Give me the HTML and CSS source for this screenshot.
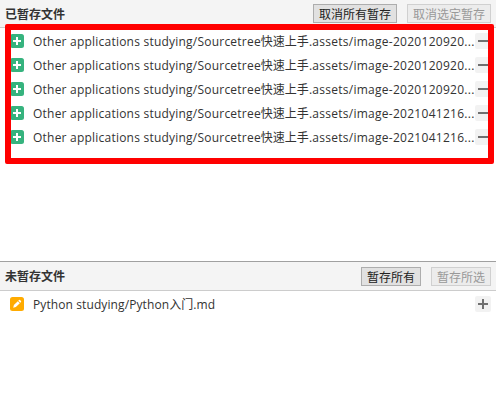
FILE: index.html
```html
<!DOCTYPE html>
<html lang="zh-CN">
<head>
<meta charset="utf-8">
<title>暂存文件</title>
<link rel="stylesheet" href="styles.css">
</head>
<body>
<svg class="defs" width="0" height="0">
  <symbol id="added" viewBox="0 0 14 14"><rect width="14" height="14" rx="2.5" fill="#36b37e"/><path d="M7 3v8M3 7h8" stroke="#fff" stroke-width="2"/></symbol>
  <symbol id="edited" viewBox="0 0 14 14"><rect width="14" height="14" rx="2.5" fill="#ffab00"/><path d="M3.2 10.8l.7-2.7 3.9-3.9 2 2-3.9 3.9zM8.3 3.7l.7-.7q.5-.4 1 0l1 1q.4.5 0 1l-.7.7z" fill="#fff"/></symbol>
  <symbol id="minus" viewBox="0 0 16 16"><path d="M3 8h10" stroke="#707070" stroke-width="2"/></symbol>
  <symbol id="plus" viewBox="0 0 16 16"><path d="M3 8h10M8 3v10" stroke="#707070" stroke-width="2"/></symbol>
</svg>
<section class="panel staged">
  <header class="bar">
    <h2>已暂存文件</h2>
    <button>取消所有暂存</button>
    <button disabled>取消选定暂存</button>
  </header>
  <ul class="files">
    <li><svg class="status"><use href="#added"/></svg><span class="name">Other applications studying/Sourcetree<span class="cjk">快速上手</span><span class="tail">.assets/image-2020120920...</span></span><svg class="action"><use href="#minus"/></svg></li>
    <li><svg class="status"><use href="#added"/></svg><span class="name">Other applications studying/Sourcetree<span class="cjk">快速上手</span><span class="tail">.assets/image-2020120920...</span></span><svg class="action"><use href="#minus"/></svg></li>
    <li><svg class="status"><use href="#added"/></svg><span class="name">Other applications studying/Sourcetree<span class="cjk">快速上手</span><span class="tail">.assets/image-2020120920...</span></span><svg class="action"><use href="#minus"/></svg></li>
    <li><svg class="status"><use href="#added"/></svg><span class="name">Other applications studying/Sourcetree<span class="cjk">快速上手</span><span class="tail">.assets/image-2021041216...</span></span><svg class="action"><use href="#minus"/></svg></li>
    <li><svg class="status"><use href="#added"/></svg><span class="name">Other applications studying/Sourcetree<span class="cjk">快速上手</span><span class="tail">.assets/image-2021041216...</span></span><svg class="action"><use href="#minus"/></svg></li>
  </ul>
  <div class="highlight"></div>
</section>
<section class="panel unstaged">
  <header class="bar">
    <h2>未暂存文件</h2>
    <button>暂存所有</button>
    <button disabled>暂存所选</button>
  </header>
  <ul class="files">
    <li><svg class="status"><use href="#edited"/></svg><span class="name">Python studying/Python<span class="cjk">入门</span><span class="tail">.md</span></span><svg class="action"><use href="#plus"/></svg></li>
  </ul>
</section>
</body>
</html>
```

FILE: styles.css
```css
* { box-sizing: border-box; }
body {
  margin: 0;
  height: 401px;
  overflow: hidden;
  background: #fff;
  color: #333;
  font: 12px "Open Sans", "Noto Sans CJK SC", sans-serif;
}
.defs { position: absolute; }
.panel { position: relative; }
.staged { height: 261px; }
.unstaged { border-top: 1px solid #a0a0a0; }
.bar {
  display: flex;
  align-items: center;
  gap: 10px;
  height: 28px;
  padding: 0 5px;
  background: #f4f4f4;
  border-bottom: 1px solid #ccc;
}
.unstaged .bar { height: 29px; }
h2 {
  flex: 1;
  margin: 0;
  font: bold 12px/18px "Noto Sans CJK SC", sans-serif;
}
button {
  height: 19px;
  padding: 0 5px;
  border: 1px solid #adadad;
  border-radius: 0;
  background: #e1e1e1;
  color: #222;
  font: 12px/17px "Noto Sans CJK SC", sans-serif;
}
button:disabled {
  border-color: #d0d0d0;
  background: #ececec;
  color: #999;
}
.files {
  margin: 0;
  padding: 1px 5px 0 10px;
  list-style: none;
}
li {
  display: flex;
  align-items: center;
  height: 24px;
}
.status { width: 14px; height: 14px; margin-right: 9px; }
.name {
  flex: 1;
  white-space: nowrap;
  line-height: 18px;
  letter-spacing: 0.1px;
}
.staged .name { letter-spacing: 0.22px; }
.staged .tail { letter-spacing: 0.27px; }
.name .cjk { font-family: "Noto Sans CJK SC", sans-serif; letter-spacing: 0; }
.action {
  width: 16px;
  height: 16px;
  border-radius: 2px;
  background: #f2f2f2;
}
.highlight {
  position: absolute;
  left: 5px;
  top: 24px;
  width: 489px;
  height: 140px;
  border: 6px solid #f00;
  border-radius: 2px;
}
```
